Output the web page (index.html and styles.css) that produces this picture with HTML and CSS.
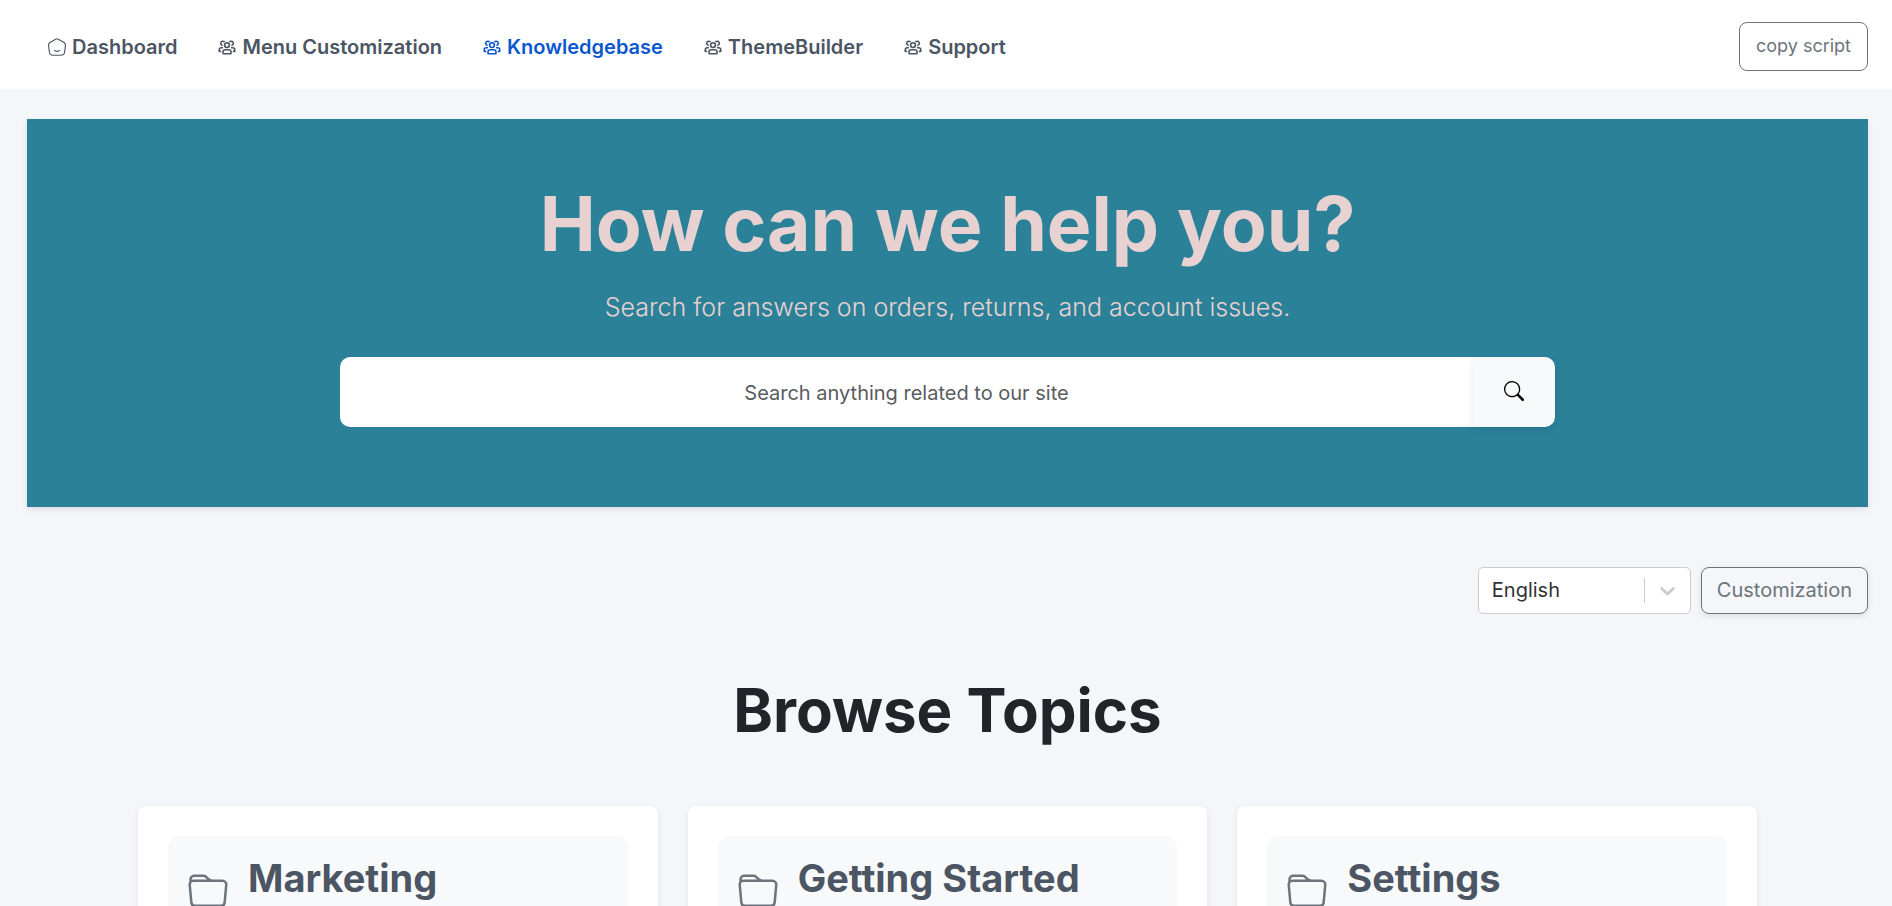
FILE: index.html
```html
<!DOCTYPE html>
<html lang="en">
  <head>
    <meta charset="UTF-8" />
    <meta name="viewport" content="width=device-width, initial-scale=1.0" />
    <title>Knowledgebase</title>
    <link rel="stylesheet" href="styles.css">
  </head>
  <body>
    <!-- shared icons -->
    <svg class="icon-defs" aria-hidden="true">
      <symbol id="icon-home" viewBox="0.6 0.8 18.8 18.4">
        <path d="M8.6 1.8 L2.6 5.4 C1.4 6.2 1.1 7.2 1.2 8.6 L2 15.2 C2.4 17.6 3.5 18.6 5.8 18.6 H14.2 C16.5 18.6 17.6 17.6 18 15.2 L18.8 8.6 C18.9 7.2 18.6 6.2 17.4 5.4 L11.4 1.8 C10.4 1.2 9.6 1.2 8.6 1.8 Z" />
        <path d="M7 13.2 C8.6 15 11.4 15 13 13.2" />
      </symbol>
      <symbol id="icon-users" viewBox="0 0 18 18">
        <circle cx="9" cy="7.1" r="2.4" />
        <path d="M5 15.2 V14 C5 12.6 6 11.8 7.4 11.8 H10.6 C12 11.8 13 12.6 13 14 V15.2 C13 15.5 12.8 15.7 12.5 15.7 H5.5 C5.2 15.7 5 15.5 5 15.2 Z" />
        <path d="M4.6 7.4 A2.1 2.1 0 1 1 6.6 4.2 M13.4 7.4 A2.1 2.1 0 1 0 11.4 4.2" />
        <path d="M3.2 13.4 H1.6 C1.3 13.4 1.2 13.2 1.2 13 V12 C1.2 10.6 2.2 9.8 3.4 9.8 H5 M14.8 13.4 H16.4 C16.7 13.4 16.8 13.2 16.8 13 V12 C16.8 10.6 15.8 9.8 14.6 9.8 H13" />
      </symbol>
      <symbol id="icon-search" viewBox="0 0 16 16">
        <path d="M11.742 10.344a6.5 6.5 0 1 0-1.397 1.398h-.001q.044.06.098.115l3.85 3.85a1 1 0 0 0 1.415-1.414l-3.85-3.85a1 1 0 0 0-.115-.1zM12 6.5a5.5 5.5 0 1 1-11 0 5.5 5.5 0 0 1 11 0" />
      </symbol>
      <symbol id="icon-folder" viewBox="0 0 16 16">
        <path d="M.54 3.87.5 3a2 2 0 0 1 2-2h3.672a2 2 0 0 1 1.414.586l.828.828A2 2 0 0 0 9.828 3h3.982a2 2 0 0 1 1.992 2.181l-.637 7A2 2 0 0 1 13.174 14H2.826a2 2 0 0 1-1.991-1.819l-.637-7a2 2 0 0 1 .342-1.31zM2.19 4a1 1 0 0 0-.996 1.09l.637 7a1 1 0 0 0 .995.91h10.348a1 1 0 0 0 .995-.91l.637-7A1 1 0 0 0 13.81 4zm4.69-1.707A1 1 0 0 0 6.172 2H2.5a1 1 0 0 0-1 .981l.006.139q.323-.119.684-.12h5.396z" />
      </symbol>
      <symbol id="icon-chevron" viewBox="0 0 20 20">
        <path d="M4.516 7.548c0.436-0.446 1.043-0.481 1.576 0l3.908 3.747 3.908-3.747c0.533-0.481 1.141-0.446 1.574 0 0.436 0.445 0.408 1.197 0 1.615-0.406 0.418-4.695 4.502-4.695 4.502-0.217 0.223-0.502 0.335-0.787 0.335s-0.57-0.112-0.789-0.335c0 0-4.287-4.084-4.695-4.502s-0.436-1.17 0-1.615z" />
      </symbol>
    </svg>

    <header class="topbar">
      <nav class="nav">
        <a class="nav-link" href="#"><svg class="nav-icon nav-icon-home" aria-hidden="true"><use href="#icon-home" /></svg>Dashboard</a>
        <a class="nav-link" href="#"><svg class="nav-icon" aria-hidden="true"><use href="#icon-users" /></svg>Menu Customization</a>
        <a class="nav-link active" href="#"><svg class="nav-icon" aria-hidden="true"><use href="#icon-users" /></svg>Knowledgebase</a>
        <a class="nav-link" href="#"><svg class="nav-icon" aria-hidden="true"><use href="#icon-users" /></svg>ThemeBuilder</a>
        <a class="nav-link" href="#"><svg class="nav-icon" aria-hidden="true"><use href="#icon-users" /></svg>Support</a>
      </nav>
      <button type="button" class="btn btn-copy">copy script</button>
    </header>

    <main class="content">
      <section class="hero">
        <h1 class="hero-title">How can we help you?</h1>
        <p class="hero-text">Search for answers on orders, returns, and account issues.</p>
        <form class="search">
          <input type="text" class="search-input" placeholder="Search anything related to our site" aria-label="Search anything related to our site" />
          <button type="submit" class="search-btn" aria-label="Search">
            <svg class="search-icon" aria-hidden="true"><use href="#icon-search" /></svg>
          </button>
        </form>
      </section>

      <div class="toolbar">
        <div class="language">
          <select class="language-select" aria-label="Language">
            <option selected>English</option>
          </select>
          <span class="language-arrow"><svg class="chevron" aria-hidden="true"><use href="#icon-chevron" /></svg></span>
        </div>
        <button type="button" class="btn btn-custom">Customization</button>
      </div>

      <h2 class="topics-title">Browse Topics</h2>

      <div class="topics">
        <div class="card">
          <div class="card-head">
            <svg class="folder" aria-hidden="true"><use href="#icon-folder" /></svg>
            <h3 class="card-title">Marketing</h3>
          </div>
        </div>
        <div class="card">
          <div class="card-head">
            <svg class="folder" aria-hidden="true"><use href="#icon-folder" /></svg>
            <h3 class="card-title">Getting Started</h3>
          </div>
        </div>
        <div class="card">
          <div class="card-head">
            <svg class="folder" aria-hidden="true"><use href="#icon-folder" /></svg>
            <h3 class="card-title">Settings</h3>
          </div>
        </div>
      </div>
    </main>
  </body>
</html>
```
FILE: styles.css
```css
* {
  box-sizing: border-box;
}

html {
  scrollbar-width: none;
}

body {
  margin: 0;
  background-color: #f4f6fa;
  color: #212529;
  font-family: Inter, sans-serif;
  font-size: 20px;
}

h1,
h2,
h3,
p {
  margin: 0;
}

input,
select,
button {
  font-family: inherit;
}

.icon-defs {
  display: none;
}

/* Top navigation */
.topbar {
  display: flex;
  justify-content: space-between;
  align-items: center;
  height: 89px;
  padding: 4px 24px 0 48px;
  background-color: #fff;
}

.nav {
  display: flex;
  gap: 41px;
}

.nav-link {
  display: flex;
  align-items: center;
  gap: 6px;
  color: #4b5563;
  font-weight: 600;
  text-decoration: none;
}

.nav-link.active {
  color: #0b57d0;
}

.nav-icon {
  width: 18px;
  height: 18px;
  fill: none;
  stroke: currentColor;
  stroke-width: 1.6;
}

.nav-icon-home {
  stroke-width: 1.2;
}

.btn {
  padding: 0 15px 2px;
  border: 1px solid #6c757d;
  border-radius: 8px;
  background-color: transparent;
  color: #6c757d;
  cursor: pointer;
}

.btn-copy {
  height: 49px;
  padding: 0 16px 2px;
  font-size: 18px;
}

/* Search banner */
.content {
  padding: 30px 24px 60px 27px;
}

.hero {
  display: flex;
  flex-direction: column;
  align-items: center;
  padding: 60px 0 80px;
  background-color: #2b8198;
  color: #e7d1d1;
  box-shadow: 0 2px 6px rgba(0, 0, 0, 0.1);
}

.hero-title {
  font-size: 75px;
  font-weight: 700;
  line-height: 90px;
}

.hero-text {
  margin: 20px 0 32px;
  font-size: 25px;
  font-weight: 300;
  line-height: 36px;
}

.search {
  display: flex;
  width: 66%;
  height: 70px;
}

.search-input {
  flex: 1;
  min-width: 0;
  padding: 2px 20px 0;
  border: 0;
  border-radius: 10px 0 0 10px;
  background-color: #fff;
  color: #212529;
  font-size: 20px;
  text-align: center;
}

.search-input::placeholder {
  color: #595c5f;
  opacity: 1;
}

.search-btn {
  display: flex;
  justify-content: center;
  align-items: center;
  width: 82px;
  padding: 0 0 2px;
  border: 0;
  border-radius: 0 10px 10px 0;
  background-color: #f8f9fa;
  color: #000;
  box-shadow: 0 2px 6px rgba(0, 0, 0, 0.1);
  cursor: pointer;
}

.search-icon {
  width: 20px;
  height: 20px;
}

/* Language and customization controls */
.toolbar {
  display: flex;
  justify-content: flex-end;
  gap: 10px;
  margin-top: 60px;
}

.language {
  position: relative;
  width: 213px;
}

.language-select {
  width: 100%;
  height: 47px;
  padding: 0 60px 2px 13px;
  border: 1px solid #ccc;
  border-radius: 5px;
  background-color: #fff;
  color: #333;
  font-size: 20px;
  appearance: none;
}

.language-arrow {
  position: absolute;
  top: 11px;
  right: 1px;
  display: flex;
  justify-content: center;
  align-items: center;
  width: 46px;
  height: 25px;
  border-left: 1px solid #ccc;
  pointer-events: none; /* clicks go through to the select */
}

.chevron {
  width: 25px;
  height: 25px;
  fill: #ccc;
}

.btn-custom {
  height: 47px;
  font-size: 20px;
  box-shadow: 0 2px 6px rgba(0, 0, 0, 0.1);
}

/* Topic cards */
.topics-title {
  margin: 60px 0;
  font-size: 60px;
  font-weight: 700;
  line-height: 72px;
  text-align: center;
}

.topics {
  display: grid;
  grid-template-columns: repeat(3, 1fr);
  gap: 30px;
  max-width: 1619px;
  margin: 0 auto;
}

.card {
  padding: 30px;
  border-radius: 8px;
  background-color: #fff;
  box-shadow: 0 2px 6px rgba(0, 0, 0, 0.08);
}

.card-head {
  display: flex;
  align-items: flex-start;
  gap: 20px;
  padding: 20px;
  border-radius: 10px;
  background-color: #f8f9fb;
}

.folder {
  width: 40px;
  height: 40px;
  margin-top: 16px;
  fill: #6c757d;
}

.card-title {
  color: #4b5563;
  font-size: 38px;
  font-weight: 700;
  line-height: 44px;
}
```
